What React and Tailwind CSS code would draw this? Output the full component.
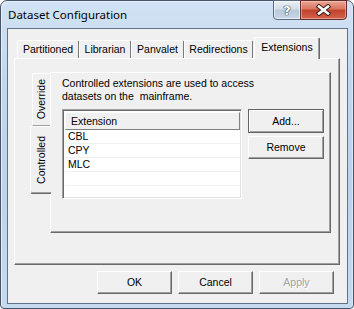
const tabs = [
  { label: "Partitioned", w: "w-[62px]" },
  { label: "Librarian", w: "w-[52px]" },
  { label: "Panvalet", w: "w-[53px]" },
  { label: "Redirections", w: "w-[69px]" },
];

const rows = ["CBL", "CPY", "MLC", "", ""];

function Btn({ children, className = "", disabled = false, isDefault = false }) {
  return (
    <div
      className={`flex items-center justify-center bg-[#f0f0f0] ${
        isDefault
          ? "border border-[#646464] shadow-[inset_1px_1px_0_#fff,inset_-1px_-1px_0_#a0a0a0]"
          : "border-t border-l border-white border-r border-b border-r-[#696969] border-b-[#696969] shadow-[inset_-1px_-1px_0_#a0a0a0]"
      } ${disabled ? "text-[#a0a0a0] [text-shadow:1px_1px_0_#fff]" : ""} ${className}`}
    >
      {children}
    </div>
  );
}

export default function App() {
  return (
    <div className="w-[354px] h-[309px] bg-white font-['Liberation_Sans',Arial,sans-serif] text-[10.5px] leading-[13px] text-black">
      <div className="w-full h-full rounded-t-[7px] rounded-b-[4px] border border-[#44546a] bg-[linear-gradient(180deg,#d2e2f4_0%,#c2d7ee_25%,#bdd3eb_60%,#c6daef_100%)] shadow-[inset_1px_1px_0_#e6f0fa,inset_-1px_0_0_#dfeaf6] flex flex-col">
        {/* title bar */}
        <div className="h-[27px] shrink-0 flex items-start">
          <span className="ml-[7px] mt-[6px] font-['Noto_Sans',sans-serif] text-[11.5px] leading-[15px] text-black">
            Dataset Configuration
          </span>
          <div className="ml-auto mr-[6px] -mt-px flex">
            <div className="w-[28px] h-[20px] rounded-bl-[4px] border border-[#5a6b80] bg-[linear-gradient(180deg,#e9eff6_0%,#d3dee9_45%,#b7c8da_50%,#c9d7e5_100%)] shadow-[inset_0_0_0_1px_rgba(255,255,255,0.6)] flex items-center justify-center">
              <span className="font-['DejaVu_Sans',sans-serif] font-bold text-[13px] leading-none text-white [text-shadow:0_0_1px_#2c3b4d,0_0_1px_#2c3b4d,0_0_1px_#2c3b4d]">
                ?
              </span>
            </div>
            <div className="w-[47px] h-[20px] -ml-px rounded-br-[4px] border border-[#5e2f2a] bg-[linear-gradient(180deg,#eaa795_0%,#d8745e_45%,#c2402a_50%,#d2644c_100%)] shadow-[inset_0_0_0_1px_rgba(255,210,200,0.5)] flex items-center justify-center">
              <svg width="17" height="12" viewBox="0 0 17 12">
                <path d="M4 2.5 L13 9.5 M13 2.5 L4 9.5" stroke="#3b1d1a" strokeWidth="4.5" strokeLinecap="square" />
                <path d="M4 2.5 L13 9.5 M13 2.5 L4 9.5" stroke="#fff" strokeWidth="2.6" strokeLinecap="square" />
              </svg>
            </div>
          </div>
        </div>

        {/* client area */}
        <div className="ml-[6px] w-[341px] h-[276px] border border-[#5f7288] bg-[#f0f0f0] flex flex-col">
          <div className="pl-[6px] pt-[8px]">
            {/* tab strip */}
            <div className="flex items-end h-[21px] pl-[3px]">
              {tabs.map((t) => (
                <div
                  key={t.label}
                  className={`${t.w} h-[18px] rounded-t-[2px] border-t border-l border-white border-r border-r-[#7a7a7a] flex items-center justify-center`}
                >
                  {t.label}
                </div>
              ))}
              <div className="relative z-10 ml-px -mb-px w-[66px] h-[22px] rounded-t-[2px] bg-[#f0f0f0] border-t border-l border-white border-r border-r-[#696969] shadow-[inset_-1px_0_0_#a0a0a0] flex items-start justify-center pt-[3px]">
                Extensions
              </div>
            </div>

            {/* outer tab panel */}
            <div className="w-[326px] h-[207px] border-t border-l border-white border-r border-b border-r-[#696969] border-b-[#696969] shadow-[inset_-1px_-1px_0_#a0a0a0] pt-[13px] pl-[15px] flex items-start">
              {/* vertical tabs */}
              <div className="w-[20px] flex flex-col items-end">
                <div className="mt-px w-[18px] h-[53px] border-t border-l border-white border-b border-b-[#a0a0a0] rounded-tl-[2px] flex items-center justify-center">
                  <span className="[writing-mode:vertical-rl] rotate-180 whitespace-nowrap">Override</span>
                </div>
                <div className="relative z-10 -mr-px w-[21px] h-[68px] bg-[#f0f0f0] border-t border-l border-white border-b border-b-[#696969] shadow-[inset_0_-1px_0_#a0a0a0] rounded-bl-[2px] flex items-center justify-center">
                  <span className="[writing-mode:vertical-rl] rotate-180 whitespace-nowrap">Controlled</span>
                </div>
              </div>

              {/* inner panel */}
              <div className="w-[281px] h-[161px] border-t border-l border-white border-r border-b border-r-[#696969] border-b-[#696969] shadow-[inset_-1px_-1px_0_#a0a0a0] pl-[11px] pt-[4px]">
                <p>
                  Controlled extensions are used to access
                  <br />
                  datasets on the&nbsp; mainframe.
                </p>
                <div className="mt-[6px] flex items-start">
                  <div className="w-[180px] h-[90px] bg-white border border-t-[#a0a0a0] border-l-[#a0a0a0] border-r-white border-b-white shadow-[inset_1px_1px_0_#696969,inset_-1px_-1px_0_#e3e3e3] p-[2px] pr-[1px]">
                    <div className="h-[18px] border-t border-l border-white border-r border-b border-r-[#808080] border-b-[#808080] bg-[#f0f0f0] pl-[5px] flex items-center">
                      Extension
                    </div>
                    {rows.map((r, i) => (
                      <div key={i} className="h-[14px] border-b border-[#f0f0f0] pl-[3px] flex items-center">
                        {r}
                      </div>
                    ))}
                  </div>
                  <div className="ml-[6px] flex flex-col gap-[3px]">
                    <Btn className="w-[76px] h-[24px]" isDefault>
                      Add...
                    </Btn>
                    <Btn className="w-[76px] h-[23px]">Remove</Btn>
                  </div>
                </div>
              </div>
            </div>
          </div>

          {/* dialog buttons */}
          <div className="mt-[6px] pr-[13px] flex justify-end gap-[6px]">
            <Btn className="w-[75px] h-[23px]">OK</Btn>
            <Btn className="w-[75px] h-[23px]">Cancel</Btn>
            <Btn className="w-[75px] h-[23px]" disabled>
              Apply
            </Btn>
          </div>
        </div>
      </div>
    </div>
  );
}
